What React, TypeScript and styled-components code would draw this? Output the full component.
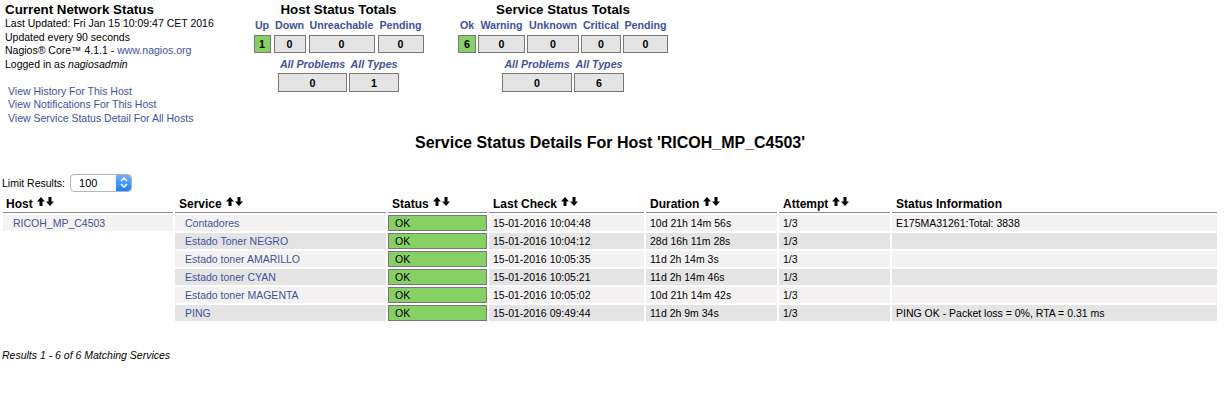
import styled, { createGlobalStyle } from 'styled-components';

// Nagios service status page for one host

const GlobalStyle = createGlobalStyle`
  body {
    margin: 0;
    background: #ffffff;
    color: #000000;
    font-family: 'Liberation Sans', Arial, sans-serif;
  }
`;

const LINK = '#40529b';

const Page = styled.div`
  width: 1230px;
  height: 393px;
  overflow: hidden;
  font-size: 10.5px;
`;

const TopRow = styled.div`
  display: flex;
  align-items: flex-start;
  padding: 2px 0 0 5px;
`;

const InfoBox = styled.div`
  width: 248px;
`;

const InfoTitle = styled.div`
  font-size: 13.33px;
  font-weight: bold;
  line-height: 15px;
`;

const InfoLine = styled.div`
  line-height: 13.5px;
  white-space: nowrap;
`;

const Link = styled.a`
  color: ${LINK};
  text-decoration: none;
`;

const LinkList = styled.div`
  margin-top: 13.5px;
  padding-left: 3px;
`;

const LinkLine = styled.div`
  line-height: 13.8px;
`;

const Totals = styled.div<{ $width: number; $gap: number }>`
  width: ${(p) => p.$width}px;
  margin-left: ${(p) => p.$gap}px;
  display: flex;
  flex-direction: column;
  align-items: center;
`;

const TotalsTitle = styled.div`
  font-size: 13.33px;
  font-weight: bold;
  line-height: 16px;
  white-space: nowrap;
`;

const TotalsGrid = styled.div<{ $cols: string; $gap: number; $top: number }>`
  display: grid;
  grid-template-columns: ${(p) => p.$cols};
  column-gap: ${(p) => p.$gap}px;
  margin-top: ${(p) => p.$top}px;
`;

const TotalsLabel = styled.a<{ $italic?: boolean }>`
  color: ${LINK};
  font-weight: bold;
  font-style: ${(p) => (p.$italic ? 'italic' : 'normal')};
  font-size: 10.67px;
  line-height: 14px;
  text-align: center;
  white-space: nowrap;
  display: flex;
  justify-content: center;
`;

const TotalsBox = styled.div<{ $ok?: boolean; $height: number }>`
  box-sizing: border-box;
  height: ${(p) => p.$height}px;
  border: 1px solid #777777;
  background: ${(p) => (p.$ok ? '#88d066' : '#e4e4e4')};
  font-weight: bold;
  font-size: 10.67px;
  display: flex;
  align-items: center;
  justify-content: center;
`;

const PageTitle = styled.div`
  margin-top: 7px;
  padding-right: 10px;
  text-align: center;
  font-size: 16px;
  font-weight: bold;
  line-height: 20px;
`;

const LimitRow = styled.div`
  margin-top: 20px;
  height: 20px;
  display: flex;
  align-items: center;
  padding-left: 2px;
  gap: 5px;
`;

const SelectBox = styled.div`
  box-sizing: border-box;
  width: 62px;
  height: 18px;
  border: 1px solid #b4b4b4;
  border-radius: 4px;
  background: #ffffff;
  display: flex;
  align-items: stretch;
  overflow: hidden;
  font-size: 11px;
`;

const SelectValue = styled.div`
  flex: 1;
  padding-left: 8px;
  display: flex;
  align-items: center;
`;

const SelectStepper = styled.div`
  width: 15px;
  background: linear-gradient(#6cb1fb, #1f7ff5);
  border-radius: 0 3px 3px 0;
  display: flex;
  align-items: center;
  justify-content: center;
`;

const Table = styled.div`
  display: grid;
  grid-template-columns: 170px 211px 99px 155px 131px 111px 325px;
  gap: 2px;
  margin: 3px 0 0 3px;
`;

const HeadCell = styled.div<{ $pad?: number }>`
  height: 17px;
  box-sizing: border-box;
  border-bottom: 1px solid #8a8a8a;
  padding-left: ${(p) => p.$pad ?? 4}px;
  font-size: 12px;
  font-weight: bold;
  line-height: 16px;
  white-space: nowrap;
  display: flex;
  align-items: flex-start;
`;

const SortArrows = styled.svg`
  margin: 1px 0 0 4px;
`;

const Cell = styled.div<{ $tone?: 'odd' | 'even' | 'none'; $pad?: number }>`
  height: 16px;
  box-sizing: border-box;
  padding-left: ${(p) => p.$pad ?? 4}px;
  background: ${(p) =>
    p.$tone === 'odd' ? '#f4f2f2' : p.$tone === 'even' ? '#e4e4e4' : 'transparent'};
  line-height: 16px;
  white-space: nowrap;
  overflow: hidden;
`;

const OkCell = styled.div`
  height: 16px;
  box-sizing: border-box;
  border: 1px solid #777777;
  background: #88d066;
  padding-left: 6px;
  line-height: 14px;
`;

const Footer = styled.div`
  margin-top: 27px;
  padding-left: 2px;
  font-style: italic;
  line-height: 14px;
`;

const Arrows = () => (
  <SortArrows width='17' height='9' viewBox='0 0 17 9'>
    <path d='M4 0 L8 4.5 L5.5 4.5 L5.5 9 L2.5 9 L2.5 4.5 L0 4.5 Z' fill='#000' />
    <path d='M13 9 L17 4.5 L14.5 4.5 L14.5 0 L11.5 0 L11.5 4.5 L9 4.5 Z' fill='#000' />
  </SortArrows>
);

const hostTop = [
  { label: 'Up', value: 1, ok: true },
  { label: 'Down', value: 0 },
  { label: 'Unreachable', value: 0 },
  { label: 'Pending', value: 0 }
];

const serviceTop = [
  { label: 'Ok', value: 6, ok: true },
  { label: 'Warning', value: 0 },
  { label: 'Unknown', value: 0 },
  { label: 'Critical', value: 0 },
  { label: 'Pending', value: 0 }
];

const services = [
  ['Contadores', '15-01-2016 10:04:48', '10d 21h 14m 56s', '1/3', 'E175MA31261:Total: 3838'],
  ['Estado Toner NEGRO', '15-01-2016 10:04:12', '28d 16h 11m 28s', '1/3', ''],
  ['Estado toner AMARILLO', '15-01-2016 10:05:35', '11d 2h 14m 3s', '1/3', ''],
  ['Estado toner CYAN', '15-01-2016 10:05:21', '11d 2h 14m 46s', '1/3', ''],
  ['Estado toner MAGENTA', '15-01-2016 10:05:02', '10d 21h 14m 42s', '1/3', ''],
  ['PING', '15-01-2016 09:49:44', '11d 2h 9m 34s', '1/3', 'PING OK - Packet loss = 0%, RTA = 0.31 ms']
];

const TotalsBlock = ({
  title,
  width,
  gap,
  cols,
  colGap,
  allCols,
  items,
  all
}: {
  title: string;
  width: number;
  gap: number;
  cols: string;
  colGap: number;
  allCols: string;
  items: { label: string; value: number; ok?: boolean }[];
  all: number[];
}) => (
  <Totals $width={width} $gap={gap}>
    <TotalsTitle>{title}</TotalsTitle>
    <TotalsGrid $cols={cols} $gap={colGap} $top={0}>
      {items.map((it) => (
        <TotalsLabel key={it.label}>{it.label}</TotalsLabel>
      ))}
    </TotalsGrid>
    <TotalsGrid $cols={cols} $gap={colGap} $top={3}>
      {items.map((it) => (
        <TotalsBox key={it.label} $ok={it.ok} $height={18}>
          {it.value}
        </TotalsBox>
      ))}
    </TotalsGrid>
    <TotalsGrid $cols={allCols} $gap={2} $top={4}>
      <TotalsLabel $italic>All Problems</TotalsLabel>
      <TotalsLabel $italic>All Types</TotalsLabel>
    </TotalsGrid>
    <TotalsGrid $cols={allCols} $gap={2} $top={2}>
      <TotalsBox $height={19}>{all[0]}</TotalsBox>
      <TotalsBox $height={19}>{all[1]}</TotalsBox>
    </TotalsGrid>
  </Totals>
);

const App = () => {
  return (
    <Page>
      <GlobalStyle />
      <TopRow>
        <InfoBox>
          <InfoTitle>Current Network Status</InfoTitle>
          <InfoLine>Last Updated: Fri Jan 15 10:09:47 CET 2016</InfoLine>
          <InfoLine>Updated every 90 seconds</InfoLine>
          <InfoLine>
            Nagios® Core™ 4.1.1 - <Link>www.nagios.org</Link>
          </InfoLine>
          <InfoLine>
            Logged in as <i>nagiosadmin</i>
          </InfoLine>
          <LinkList>
            <LinkLine>
              <Link>View History For This Host</Link>
            </LinkLine>
            <LinkLine>
              <Link>View Notifications For This Host</Link>
            </LinkLine>
            <LinkLine>
              <Link>View Service Status Detail For All Hosts</Link>
            </LinkLine>
          </LinkList>
        </InfoBox>
        <TotalsBlock
          title='Host Status Totals'
          width={171}
          gap={0}
          cols='17px 32px 66px 46px'
          colGap={3}
          allCols='69px 50px'
          items={hostTop}
          all={[0, 1]}
        />
        <TotalsBlock
          title='Service Status Totals'
          width={210}
          gap={34}
          cols='18px 47px 52px 40px 45px'
          colGap={2}
          allCols='70px 50px'
          items={serviceTop}
          all={[0, 6]}
        />
      </TopRow>

      <PageTitle>Service Status Details For Host 'RICOH_MP_C4503'</PageTitle>

      <LimitRow>
        <span>Limit Results:</span>
        <SelectBox>
          <SelectValue>100</SelectValue>
          <SelectStepper>
            <svg width='8' height='11' viewBox='0 0 8 11'>
              <path d='M1 4 L4 1 L7 4 M1 7 L4 10 L7 7' stroke='#fff' strokeWidth='1.5' fill='none' />
            </svg>
          </SelectStepper>
        </SelectBox>
      </LimitRow>

      <Table>
        <HeadCell $pad={3}>
          Host <Arrows />
        </HeadCell>
        <HeadCell>
          Service <Arrows />
        </HeadCell>
        <HeadCell>
          Status <Arrows />
        </HeadCell>
        <HeadCell>
          Last Check <Arrows />
        </HeadCell>
        <HeadCell>
          Duration <Arrows />
        </HeadCell>
        <HeadCell>
          Attempt <Arrows />
        </HeadCell>
        <HeadCell>Status Information</HeadCell>

        {services.map((row, i) => {
          const tone = i % 2 === 0 ? 'odd' : 'even';
          return [
            <Cell key={`h${i}`} $tone={i === 0 ? 'odd' : 'none'} $pad={10}>
              {i === 0 && <Link>RICOH_MP_C4503</Link>}
            </Cell>,
            <Cell key={`s${i}`} $tone={tone} $pad={10}>
              <Link>{row[0]}</Link>
            </Cell>,
            <OkCell key={`o${i}`}>OK</OkCell>,
            <Cell key={`c${i}`} $tone={tone}>
              {row[1]}
            </Cell>,
            <Cell key={`d${i}`} $tone={tone}>
              {row[2]}
            </Cell>,
            <Cell key={`a${i}`} $tone={tone}>
              {row[3]}
            </Cell>,
            <Cell key={`i${i}`} $tone={tone}>
              {row[4]}
            </Cell>
          ];
        })}
      </Table>

      <Footer>Results 1 - 6 of 6 Matching Services</Footer>
    </Page>
  );
};

export default App;
